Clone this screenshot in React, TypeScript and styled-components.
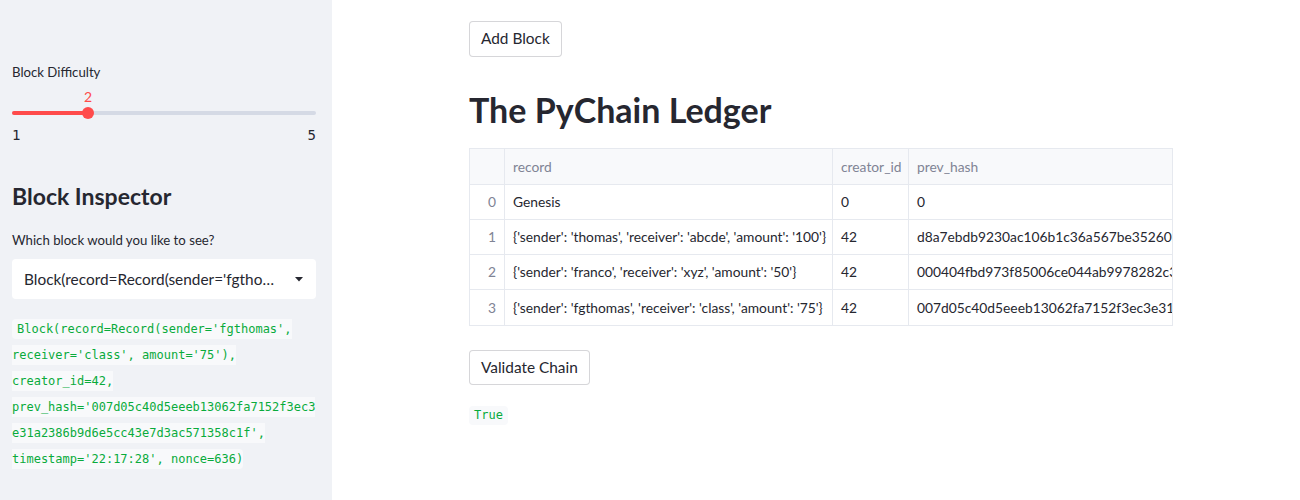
import React from "react";
import styled, { createGlobalStyle } from "styled-components";

const Global = createGlobalStyle`
  html, body { margin: 0; padding: 0; background: #ffffff; }
  body {
    font-family: "Lato", "Noto Sans", sans-serif;
    color: #262730;
    -webkit-font-smoothing: antialiased;
  }
  * { box-sizing: border-box; }
`;

const Page = styled.div`
  display: flex;
  width: 1300px;
  min-height: 500px;
`;

const Sidebar = styled.aside`
  width: 332px;
  flex: 0 0 332px;
  min-height: 500px;
  background: #f0f2f6;
  padding: 62px 16px 0 12px;
  display: flex;
  flex-direction: column;
`;

const WidgetLabel = styled.div<{ $gap?: number }>`
  font-size: 13.2px;
  line-height: 20px;
  color: #262730;
  margin-top: ${(p) => p.$gap ?? 0}px;
`;

const SliderBox = styled.div`
  display: flex;
  flex-direction: column;
  width: 304px;
  margin-top: 5px;
`;

const ValueRow = styled.div`
  position: relative;
  height: 20px;
`;

const ThumbValue = styled.span`
  position: absolute;
  top: 0;
  transform: translateX(-50%);
  font-size: 14px;
  line-height: 20px;
  color: #ff4b4b;
`;

const Track = styled.div`
  position: relative;
  height: 4px;
  margin-top: 4px;
  border-radius: 2px;
  background: #d5dae5;
`;

const TrackFill = styled.div`
  height: 100%;
  border-radius: 2px;
  background: #ff4b4b;
`;

const Thumb = styled.div`
  position: absolute;
  top: 50%;
  width: 12px;
  height: 12px;
  border-radius: 50%;
  background: #ff4b4b;
  transform: translate(-50%, -50%);
`;

const TickRow = styled.div`
  display: flex;
  justify-content: space-between;
  margin-top: 10px;
  font-family: "DejaVu Sans Mono", "Liberation Mono", monospace;
  font-size: 14px;
  line-height: 20px;
  color: #262730;
`;

const SideHeading = styled.h2`
  margin: 33px 0 0;
  font-size: 23px;
  line-height: 36px;
  font-weight: 700;
  color: #262730;
`;

const Select = styled.div`
  margin-top: 9px;
  width: 304px;
  height: 40px;
  background: #ffffff;
  border-radius: 4px;
  display: flex;
  align-items: center;
  justify-content: space-between;
  padding: 0 13px 0 12px;
`;

const SelectText = styled.span`
  font-size: 15.4px;
  line-height: 20px;
  white-space: nowrap;
  overflow: hidden;
  text-overflow: ellipsis;
  width: 254px;
  color: #262730;
`;

const CodePara = styled.p`
  margin: 17px 0 0;
  width: 304px;
  font-family: "DejaVu Sans Mono", "Liberation Mono", monospace;
  font-size: 12px;
  line-height: 26px;
  white-space: nowrap;
`;

const Code = styled.code`
  font-family: inherit;
  font-size: inherit;
  color: #09ab3b;
  background: #f8f9fb;
  padding: 3px 0 3px 5px;
  border-radius: 4px;
`;

const Main = styled.main`
  flex: 1;
  padding: 21px 0 0 137px;
`;

const Content = styled.div`
  width: 704px;
  display: flex;
  flex-direction: column;
  align-items: flex-start;
`;

const Button = styled.button<{ $gap?: number }>`
  margin-top: ${(p) => p.$gap ?? 0}px;
  font-family: inherit;
  font-size: 15.4px;
  line-height: 25.6px;
  padding: 4px 11px;
  color: #262730;
  background: #ffffff;
  border: 1px solid rgba(49, 51, 63, 0.2);
  border-radius: 4px;
`;

const Title = styled.h1`
  margin: 29px 0 0;
  font-size: 34px;
  line-height: 48px;
  font-weight: 700;
  color: #262730;
`;

const TableFrame = styled.div`
  margin-top: 14px;
  width: 704px;
  border: 1px solid #e6e9ef;
  overflow: hidden;
`;

const Table = styled.table`
  border-collapse: separate;
  border-spacing: 0;
  table-layout: fixed;
  width: 839px;
  font-size: 13.8px;
  color: #262730;
`;

const HeadCell = styled.th<{ $w: number }>`
  width: ${(p) => p.$w}px;
  height: 36px;
  padding: 0 8px;
  text-align: left;
  font-weight: 400;
  color: #808495;
  background: #f8f9fb;
  border-right: 1px solid #e6e9ef;
  border-bottom: 1px solid #e6e9ef;
  white-space: nowrap;
  overflow: hidden;
`;

const Cell = styled.td<{ $index?: boolean; $last?: boolean }>`
  height: 35px;
  padding: 0 8px;
  text-align: ${(p) => (p.$index ? "right" : "left")};
  color: ${(p) => (p.$index ? "#808495" : "#262730")};
  border-right: 1px solid #e6e9ef;
  border-bottom: ${(p) => (p.$last ? "none" : "1px solid #e6e9ef")};
  white-space: nowrap;
  overflow: hidden;
`;

const Result = styled.code`
  margin-top: 21px;
  font-family: "DejaVu Sans Mono", "Liberation Mono", monospace;
  font-size: 12px;
  line-height: 19px;
  color: #09ab3b;
  background: #f8f9fb;
  padding: 0 5px;
  border-radius: 4px;
`;

const Caret = () => (
  <svg width="8" height="5" viewBox="0 0 8 5" aria-hidden="true">
    <path d="M0 0h8L4 4.5z" fill="#262730" />
  </svg>
);

const rows = [
  { i: 0, record: "Genesis", creator: "0", hash: "0" },
  {
    i: 1,
    record: "{'sender': 'thomas', 'receiver': 'abcde', 'amount': '100'}",
    creator: "42",
    hash: "d8a7ebdb9230ac106b1c36a567be3526026f9a1c3e5d9b8f2a7c1e4",
  },
  {
    i: 2,
    record: "{'sender': 'franco', 'receiver': 'xyz', 'amount': '50'}",
    creator: "42",
    hash: "000404fbd973f85006ce044ab9978282c365b0e1d4a7c2f9b6e3a18",
  },
  {
    i: 3,
    record: "{'sender': 'fgthomas', 'receiver': 'class', 'amount': '75'}",
    creator: "42",
    hash: "007d05c40d5eeeb13062fa7152f3ec3e31a2386b9d6e5cc43e7d3ac571358c1f",
  },
];

const blockLines = [
  "Block(record=Record(sender='fgthomas',",
  "receiver='class', amount='75'),",
  "creator_id=42,",
  "prev_hash='007d05c40d5eeeb13062fa7152f3ec3",
  "e31a2386b9d6e5cc43e7d3ac571358c1f',",
  "timestamp='22:17:28', nonce=636)",
];

export default function App() {
  const value = 2;
  const pct = ((value - 1) / 4) * 100;
  return (
    <>
      <Global />
      <Page>
        <Sidebar>
          <WidgetLabel>Block Difficulty</WidgetLabel>
          <SliderBox>
            <ValueRow>
              <ThumbValue style={{ left: `${pct}%` }}>{value}</ThumbValue>
            </ValueRow>
            <Track>
              <TrackFill style={{ width: `${pct}%` }} />
              <Thumb style={{ left: `${pct}%` }} />
            </Track>
            <TickRow>
              <span>1</span>
              <span>5</span>
            </TickRow>
          </SliderBox>
          <SideHeading>Block Inspector</SideHeading>
          <WidgetLabel $gap={16}>Which block would you like to see?</WidgetLabel>
          <Select>
            <SelectText>
              Block(record=Record(sender='fgthomas', receiver='class', amount='75'), creator_id=42)
            </SelectText>
            <Caret />
          </Select>
          <CodePara>
            <Code>
              {blockLines.map((line, k) => (
                <React.Fragment key={k}>
                  {k > 0 && <br />}
                  {line}
                </React.Fragment>
              ))}
            </Code>
          </CodePara>
        </Sidebar>
        <Main>
          <Content>
            <Button>Add Block</Button>
            <Title>The PyChain Ledger</Title>
            <TableFrame>
              <Table>
                <thead>
                  <tr>
                    <HeadCell $w={35}></HeadCell>
                    <HeadCell $w={328}>record</HeadCell>
                    <HeadCell $w={76}>creator_id</HeadCell>
                    <HeadCell $w={400}>prev_hash</HeadCell>
                  </tr>
                </thead>
                <tbody>
                  {rows.map((r, k) => {
                    const last = k === rows.length - 1;
                    return (
                      <tr key={r.i}>
                        <Cell $index $last={last}>{r.i}</Cell>
                        <Cell $last={last}>{r.record}</Cell>
                        <Cell $last={last}>{r.creator}</Cell>
                        <Cell $last={last}>{r.hash}</Cell>
                      </tr>
                    );
                  })}
                </tbody>
              </Table>
            </TableFrame>
            <Button $gap={24}>Validate Chain</Button>
            <Result>True</Result>
          </Content>
        </Main>
      </Page>
    </>
  );
}
